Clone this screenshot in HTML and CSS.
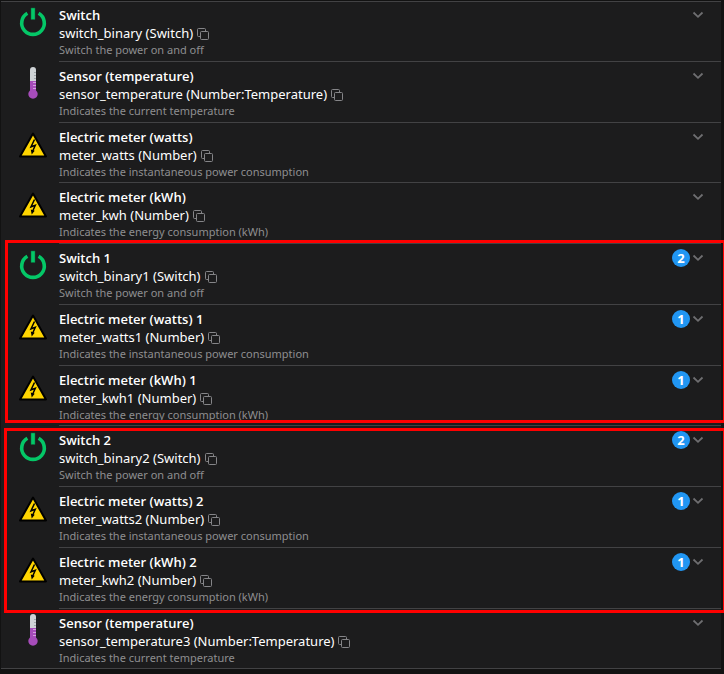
FILE: index.html
```
<!DOCTYPE html>
<html lang="en">
<head>
<meta charset="utf-8">
<meta name="viewport" content="width=device-width, initial-scale=1">
<title>Channels</title>
<link rel="stylesheet" href="styles.css">
</head>
<body>

<svg class="sprite" aria-hidden="true">
  <symbol id="power" viewBox="0 0 32 32">
    <path d="M10.4 7.3A11.3 11.3 0 1 0 21.6 7.3" fill="none" stroke="#04c767" stroke-width="3.6"/>
    <path d="M14 2h4v11.5h-4z" fill="#04c767" stroke="#0a6b3c" stroke-width=".5"/>
  </symbol>
  <symbol id="thermometer" viewBox="0 0 32 32">
    <path d="M13 3a3 3 0 0 1 6 0v12h-6z" fill="#cfd3d6"/>
    <path d="M13 14h6v9.400a4.700 4.700 0 1 1-6 0z" fill="#a64cba"/>
    <path d="M17 5.500h2M17 8.500h2M17 11.500h2" stroke="#9fa5a9"/>
    <path d="M16 15.500h3M16 18.500h3M16 21.500h3" stroke="#d3a0de"/>
  </symbol>
  <symbol id="voltage" viewBox="0 0 32 32">
    <path d="M16 5.500L29 28.500H3z" fill="#ffd500" stroke="#000" stroke-width="2" stroke-linejoin="round"/>
    <path d="M17.500 11.500L14 18.800l4.300-1.600-2.800 6.300" fill="none" stroke="#000" stroke-width="1.500"/>
    <path d="M13.800 21.500l.9 5 3-3.700z"/>
  </symbol>
  <symbol id="copy" viewBox="0 0 12 12">
    <path d="M3.500 8.500h-2a1 1 0 0 1-1-1v-6a1 1 0 0 1 1-1h6a1 1 0 0 1 1 1v2" fill="none" stroke="#858588"/>
    <rect x="3.500" y="3.500" width="8" height="8" rx="1" fill="none" stroke="#858588"/>
  </symbol>
  <symbol id="chevron" viewBox="0 0 12 8">
    <path d="M1.500 1.500L6 5.800l4.500-4.300" fill="none" stroke="#6e6e71" stroke-width="1.800"/>
  </symbol>
</svg>

<main class="channels">
<ul class="channel-list">
  <li class="channel">
    <svg class="icon"><use href="#power"/></svg>
    <div class="info">
      <div class="text">
        <div class="title">Switch</div>
        <div class="name">switch_binary (Switch)<button class="copy" aria-label="Copy"><svg><use href="#copy"/></svg></button></div>
        <div class="desc">Switch the power on and off</div>
      </div>
      <button class="expand" aria-label="Expand"><svg><use href="#chevron"/></svg></button>
    </div>
  </li>
  <li class="channel">
    <svg class="icon"><use href="#thermometer"/></svg>
    <div class="info">
      <div class="text">
        <div class="title">Sensor (temperature)</div>
        <div class="name">sensor_temperature (Number:Temperature)<button class="copy" aria-label="Copy"><svg><use href="#copy"/></svg></button></div>
        <div class="desc">Indicates the current temperature</div>
      </div>
      <button class="expand" aria-label="Expand"><svg><use href="#chevron"/></svg></button>
    </div>
  </li>
  <li class="channel">
    <svg class="icon"><use href="#voltage"/></svg>
    <div class="info">
      <div class="text">
        <div class="title">Electric meter (watts)</div>
        <div class="name">meter_watts (Number)<button class="copy" aria-label="Copy"><svg><use href="#copy"/></svg></button></div>
        <div class="desc">Indicates the instantaneous power consumption</div>
      </div>
      <button class="expand" aria-label="Expand"><svg><use href="#chevron"/></svg></button>
    </div>
  </li>
  <li class="channel">
    <svg class="icon"><use href="#voltage"/></svg>
    <div class="info">
      <div class="text">
        <div class="title">Electric meter (kWh)</div>
        <div class="name">meter_kwh (Number)<button class="copy" aria-label="Copy"><svg><use href="#copy"/></svg></button></div>
        <div class="desc">Indicates the energy consumption (kWh)</div>
      </div>
      <button class="expand" aria-label="Expand"><svg><use href="#chevron"/></svg></button>
    </div>
  </li>
  <li class="channel">
    <svg class="icon"><use href="#power"/></svg>
    <div class="info">
      <div class="text">
        <div class="title">Switch 1</div>
        <div class="name">switch_binary1 (Switch)<button class="copy" aria-label="Copy"><svg><use href="#copy"/></svg></button></div>
        <div class="desc">Switch the power on and off</div>
      </div>
      <span class="badge">2</span>
      <button class="expand" aria-label="Expand"><svg><use href="#chevron"/></svg></button>
    </div>
  </li>
  <li class="channel">
    <svg class="icon"><use href="#voltage"/></svg>
    <div class="info">
      <div class="text">
        <div class="title">Electric meter (watts) 1</div>
        <div class="name">meter_watts1 (Number)<button class="copy" aria-label="Copy"><svg><use href="#copy"/></svg></button></div>
        <div class="desc">Indicates the instantaneous power consumption</div>
      </div>
      <span class="badge">1</span>
      <button class="expand" aria-label="Expand"><svg><use href="#chevron"/></svg></button>
    </div>
  </li>
  <li class="channel">
    <svg class="icon"><use href="#voltage"/></svg>
    <div class="info">
      <div class="text">
        <div class="title">Electric meter (kWh) 1</div>
        <div class="name">meter_kwh1 (Number)<button class="copy" aria-label="Copy"><svg><use href="#copy"/></svg></button></div>
        <div class="desc">Indicates the energy consumption (kWh)</div>
      </div>
      <span class="badge">1</span>
      <button class="expand" aria-label="Expand"><svg><use href="#chevron"/></svg></button>
    </div>
  </li>
  <li class="channel">
    <svg class="icon"><use href="#power"/></svg>
    <div class="info">
      <div class="text">
        <div class="title">Switch 2</div>
        <div class="name">switch_binary2 (Switch)<button class="copy" aria-label="Copy"><svg><use href="#copy"/></svg></button></div>
        <div class="desc">Switch the power on and off</div>
      </div>
      <span class="badge">2</span>
      <button class="expand" aria-label="Expand"><svg><use href="#chevron"/></svg></button>
    </div>
  </li>
  <li class="channel">
    <svg class="icon"><use href="#voltage"/></svg>
    <div class="info">
      <div class="text">
        <div class="title">Electric meter (watts) 2</div>
        <div class="name">meter_watts2 (Number)<button class="copy" aria-label="Copy"><svg><use href="#copy"/></svg></button></div>
        <div class="desc">Indicates the instantaneous power consumption</div>
      </div>
      <span class="badge">1</span>
      <button class="expand" aria-label="Expand"><svg><use href="#chevron"/></svg></button>
    </div>
  </li>
  <li class="channel">
    <svg class="icon"><use href="#voltage"/></svg>
    <div class="info">
      <div class="text">
        <div class="title">Electric meter (kWh) 2</div>
        <div class="name">meter_kwh2 (Number)<button class="copy" aria-label="Copy"><svg><use href="#copy"/></svg></button></div>
        <div class="desc">Indicates the energy consumption (kWh)</div>
      </div>
      <span class="badge">1</span>
      <button class="expand" aria-label="Expand"><svg><use href="#chevron"/></svg></button>
    </div>
  </li>
  <li class="channel">
    <svg class="icon"><use href="#thermometer"/></svg>
    <div class="info">
      <div class="text">
        <div class="title">Sensor (temperature)</div>
        <div class="name">sensor_temperature3 (Number:Temperature)<button class="copy" aria-label="Copy"><svg><use href="#copy"/></svg></button></div>
        <div class="desc">Indicates the current temperature</div>
      </div>
      <button class="expand" aria-label="Expand"><svg><use href="#chevron"/></svg></button>
    </div>
  </li>
</ul>
<div class="mark mark-first"></div>
<div class="mark mark-second"></div>
</main>

</body>
</html>
```
FILE: styles.css
```
* {
  box-sizing: border-box;
}

body {
  margin: 0;
  background: #121212;
  color: #fff;
  font-family: "Noto Sans", "Open Sans", sans-serif;
  font-size: 13px;
}

.sprite {
  display: none;
}

.channels {
  position: relative;
  overflow: hidden;
  padding: 1px 3px 5px 1px;
}

.channel-list {
  list-style: none;
  margin: 0;
  padding: 0;
  background: #1c1c1d;
  border-top: 1px solid #424244;
  border-bottom: 1px solid #424244;
}

.channel {
  display: flex;
  padding-left: 16px;
}

.icon {
  flex: none;
  width: 32px;
  height: 32px;
  margin: 5px 10px 0 0;
}

.info {
  flex: 1;
  display: flex;
  align-items: flex-start;
  padding: 5px 17px 3px 0;
  border-bottom: 1px solid #424244;
}

.text {
  flex: 1;
}

/* every fourth row is a pixel shorter */
.channel:nth-child(4n+3) .info {
  padding-bottom: 2px;
}

.channel:first-child .info {
  padding-top: 4px;
}

.channel:first-child .icon {
  margin-top: 4px;
}

.channel:last-child .info {
  border-bottom: none;
}

.title {
  font-family: "Open Sans", "Noto Sans", sans-serif;
  font-weight: 600;
  line-height: 18px;
}

.name {
  display: flex;
  align-items: center;
  line-height: 18px;
}

.desc {
  font-size: 11px;
  line-height: 16px;
  color: #8e8e90;
}

button {
  padding: 0;
  border: none;
  background: none;
  cursor: pointer;
}

.copy {
  height: 12px;
  margin: 2px 0 0 4px;
}

.copy svg {
  display: block;
  width: 12px;
  height: 12px;
}

.expand {
  height: 18px;
}

.expand svg {
  display: block;
  width: 12px;
  height: 8px;
}

.badge {
  width: 18px;
  height: 18px;
  margin-right: 2px;
  border-radius: 50%;
  background: #2196f3;
  font-weight: bold;
  line-height: 18px;
  text-align: center;
}

/* red frames round the endpoint groups */
.mark {
  position: absolute;
  right: -2px;
  border: 3px solid #f00;
  pointer-events: none;
}

.mark-first {
  top: 240px;
  left: 5px;
  height: 183px;
}

.mark-second {
  top: 428px;
  left: 4px;
  height: 185px;
}
```
